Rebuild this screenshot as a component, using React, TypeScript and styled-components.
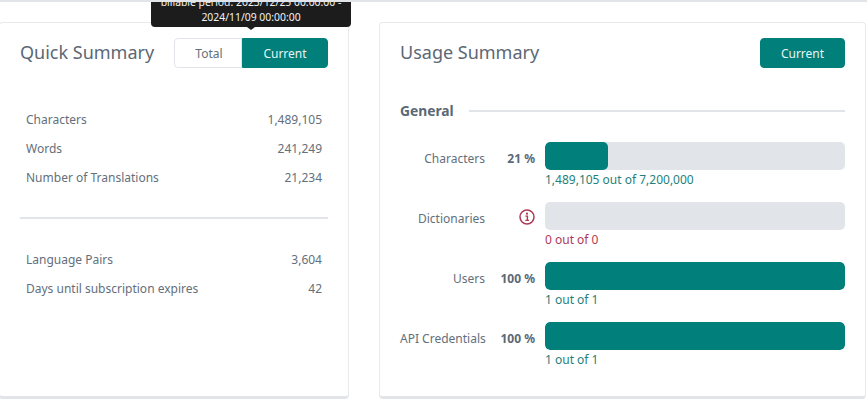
import styled, { createGlobalStyle } from "styled-components";

const GlobalStyle = createGlobalStyle`
  html, body {
    margin: 0;
    padding: 0;
    background: #fff;
    font-family: "Noto Sans", "Open Sans", sans-serif;
  }
`;

const teal = "#007f7b";
const slate = "#5b6875";
const muted = "#636f7b";
const line = "#e1e5e9";
const danger = "#ad3a58";

const Page = styled.div`
  width: 868px;
  height: 405px;
  margin-left: -1px;
  box-sizing: border-box;
  overflow: hidden;
  border-top: 2px solid ${line};
  padding-top: 20px;
  display: grid;
  grid-template-columns: 350px 487px;
  column-gap: 30px;
  align-items: start;
`;

const Card = styled.section`
  position: relative;
  box-sizing: border-box;
  height: 377px;
  background: #fff;
  border: 1px solid #e8ebee;
  border-bottom: 3px solid ${line};
  border-radius: 4px;
  padding: 15px 20px 0;
`;

const CardHeader = styled.header`
  display: flex;
  align-items: center;
  justify-content: space-between;
  height: 30px;
`;

const Title = styled.h2`
  margin: 0;
  padding-bottom: 2px;
  font-size: 18px;
  font-weight: 400;
  color: ${slate};
`;

const Toggle = styled.div`
  display: flex;
  height: 30px;
`;

const ToggleButton = styled.button<{ $active?: boolean; $width: number }>`
  width: ${(p) => p.$width}px;
  height: 30px;
  box-sizing: border-box;
  padding: 0 0 0 ${(p) => (p.$active ? 0 : 2)}px;
  font: 400 12px "Noto Sans", sans-serif;
  color: ${(p) => (p.$active ? "#e6f5f3" : muted)};
  background: ${(p) => (p.$active ? teal : "#fff")};
  border: 1px solid ${(p) => (p.$active ? teal : line)};
  border-radius: ${(p) => (p.$active ? "0 4px 4px 0" : "4px 0 0 4px")};
`;

const SoloButton = styled(ToggleButton)`
  border-radius: 4px;
`;

const Tooltip = styled.div`
  position: absolute;
  left: 151px;
  top: -24px;
  width: 200px;
  box-sizing: border-box;
  padding: 0 8px;
  height: 28px;
  display: flex;
  align-items: flex-end;
  justify-content: center;
  background: #1c1c1c;
  border-radius: 0 0 4px 4px;
  color: #f2f2f2;
  font-size: 10.4px;
  line-height: 15px;
  text-align: center;
  z-index: 2;

  &::after {
    content: "";
    position: absolute;
    left: 96px;
    top: 100%;
    border-left: 4px solid transparent;
    border-right: 4px solid transparent;
    border-top: 3px solid #1c1c1c;
  }
`;

const TooltipText = styled.div`
  padding-bottom: 2px;
  white-space: nowrap;
`;

const StatGroup = styled.dl<{ $top: number }>`
  margin: ${(p) => p.$top}px 0 0;
  padding: 0 6px;
  display: flex;
  flex-direction: column;
`;

const StatRow = styled.div`
  display: flex;
  justify-content: space-between;
  align-items: center;
  height: 29px;
  font-size: 12px;
  color: ${muted};
`;

const StatLabel = styled.dt``;

const StatValue = styled.dd`
  margin: 0;
`;

const Divider = styled.hr`
  margin: 25px 0 0;
  border: 0;
  height: 2px;
  background: ${line};
`;

const SectionHead = styled.div`
  display: flex;
  align-items: center;
  gap: 15px;
  margin-top: 33px;
  height: 20px;
`;

const SectionName = styled.h3`
  margin: 0;
  padding-bottom: 2px;
  font-size: 13.8px;
  font-weight: 700;
  color: ${slate};
`;

const SectionRule = styled.div`
  flex: 1;
  height: 2px;
  background: ${line};
`;

const UsageList = styled.div`
  margin-top: 21px;
  display: flex;
  flex-direction: column;
  gap: 14px;
`;

const UsageRow = styled.div`
  display: grid;
  grid-template-columns: 85px 60px 300px;
  align-items: start;
  height: 46px;
`;

const UsageLabel = styled.div`
  height: 28px;
  line-height: 33px;
  font-size: 12px;
  color: ${muted};
  text-align: right;
  white-space: nowrap;
`;

const UsagePercent = styled.div`
  height: 28px;
  line-height: 33px;
  padding-right: 10px;
  font-size: 12px;
  font-weight: 700;
  color: ${slate};
  text-align: right;
  white-space: nowrap;
`;

const AlertSlot = styled.div`
  height: 30px;
  padding-right: 10px;
  display: flex;
  align-items: center;
  justify-content: flex-end;
`;

const UsageBody = styled.div`
  display: flex;
  flex-direction: column;
`;

const Track = styled.div`
  height: 28px;
  background: ${line};
  border-radius: 5px;
  overflow: hidden;
`;

const Fill = styled.div`
  height: 100%;
  background: ${teal};
  border-radius: 5px;
`;

const Caption = styled.div<{ $alert?: boolean }>`
  margin-top: 2px;
  font-size: 12px;
  line-height: 16px;
  color: ${(p) => (p.$alert ? danger : "#1f7f7b")};
`;

const InfoIcon = () => (
  <svg width="16" height="16" viewBox="0 0 16 16" fill="none">
    <circle cx="8" cy="8" r="7" stroke={danger} strokeWidth="1.5" />
    <circle cx="8" cy="4.7" r="1.1" fill={danger} />
    <path d="M6.4 7.1H8.4V11.1M6.3 11.4H10" stroke={danger} strokeWidth="1.4" />
  </svg>
);

interface Usage {
  label: string;
  percent: number | null;
  caption: string;
}

const usage: Usage[] = [
  { label: "Characters", percent: 21, caption: "1,489,105 out of 7,200,000" },
  { label: "Dictionaries", percent: null, caption: "0 out of 0" },
  { label: "Users", percent: 100, caption: "1 out of 1" },
  { label: "API Credentials", percent: 100, caption: "1 out of 1" },
];

const totals = [
  ["Characters", "1,489,105"],
  ["Words", "241,249"],
  ["Number of Translations", "21,234"],
];

const account = [
  ["Language Pairs", "3,604"],
  ["Days until subscription expires", "42"],
];

export default function App() {
  return (
    <>
      <GlobalStyle />
      <Page>
        <Card>
          <Tooltip>
            <TooltipText>
              billable period: 2023/12/25 00:00:00 -
              <br />
              2024/11/09 00:00:00
            </TooltipText>
          </Tooltip>
          <CardHeader>
            <Title>Quick Summary</Title>
            <Toggle>
              <ToggleButton $width={68}>Total</ToggleButton>
              <ToggleButton $width={86} $active>
                Current
              </ToggleButton>
            </Toggle>
          </CardHeader>
          <StatGroup $top={37}>
            {totals.map(([label, value]) => (
              <StatRow key={label}>
                <StatLabel>{label}</StatLabel>
                <StatValue>{value}</StatValue>
              </StatRow>
            ))}
          </StatGroup>
          <Divider />
          <StatGroup $top={26}>
            {account.map(([label, value]) => (
              <StatRow key={label}>
                <StatLabel>{label}</StatLabel>
                <StatValue>{value}</StatValue>
              </StatRow>
            ))}
          </StatGroup>
        </Card>

        <Card>
          <CardHeader>
            <Title>Usage Summary</Title>
            <SoloButton $width={85} $active>
              Current
            </SoloButton>
          </CardHeader>
          <SectionHead>
            <SectionName>General</SectionName>
            <SectionRule />
          </SectionHead>
          <UsageList>
            {usage.map((u) => (
              <UsageRow key={u.label}>
                <UsageLabel>{u.label}</UsageLabel>
                {u.percent === null ? (
                  <AlertSlot>
                    <InfoIcon />
                  </AlertSlot>
                ) : (
                  <UsagePercent>{u.percent} %</UsagePercent>
                )}
                <UsageBody>
                  <Track>
                    {u.percent !== null && <Fill style={{ width: `${u.percent}%` }} />}
                  </Track>
                  <Caption $alert={u.percent === null}>{u.caption}</Caption>
                </UsageBody>
              </UsageRow>
            ))}
          </UsageList>
        </Card>
      </Page>
    </>
  );
}
